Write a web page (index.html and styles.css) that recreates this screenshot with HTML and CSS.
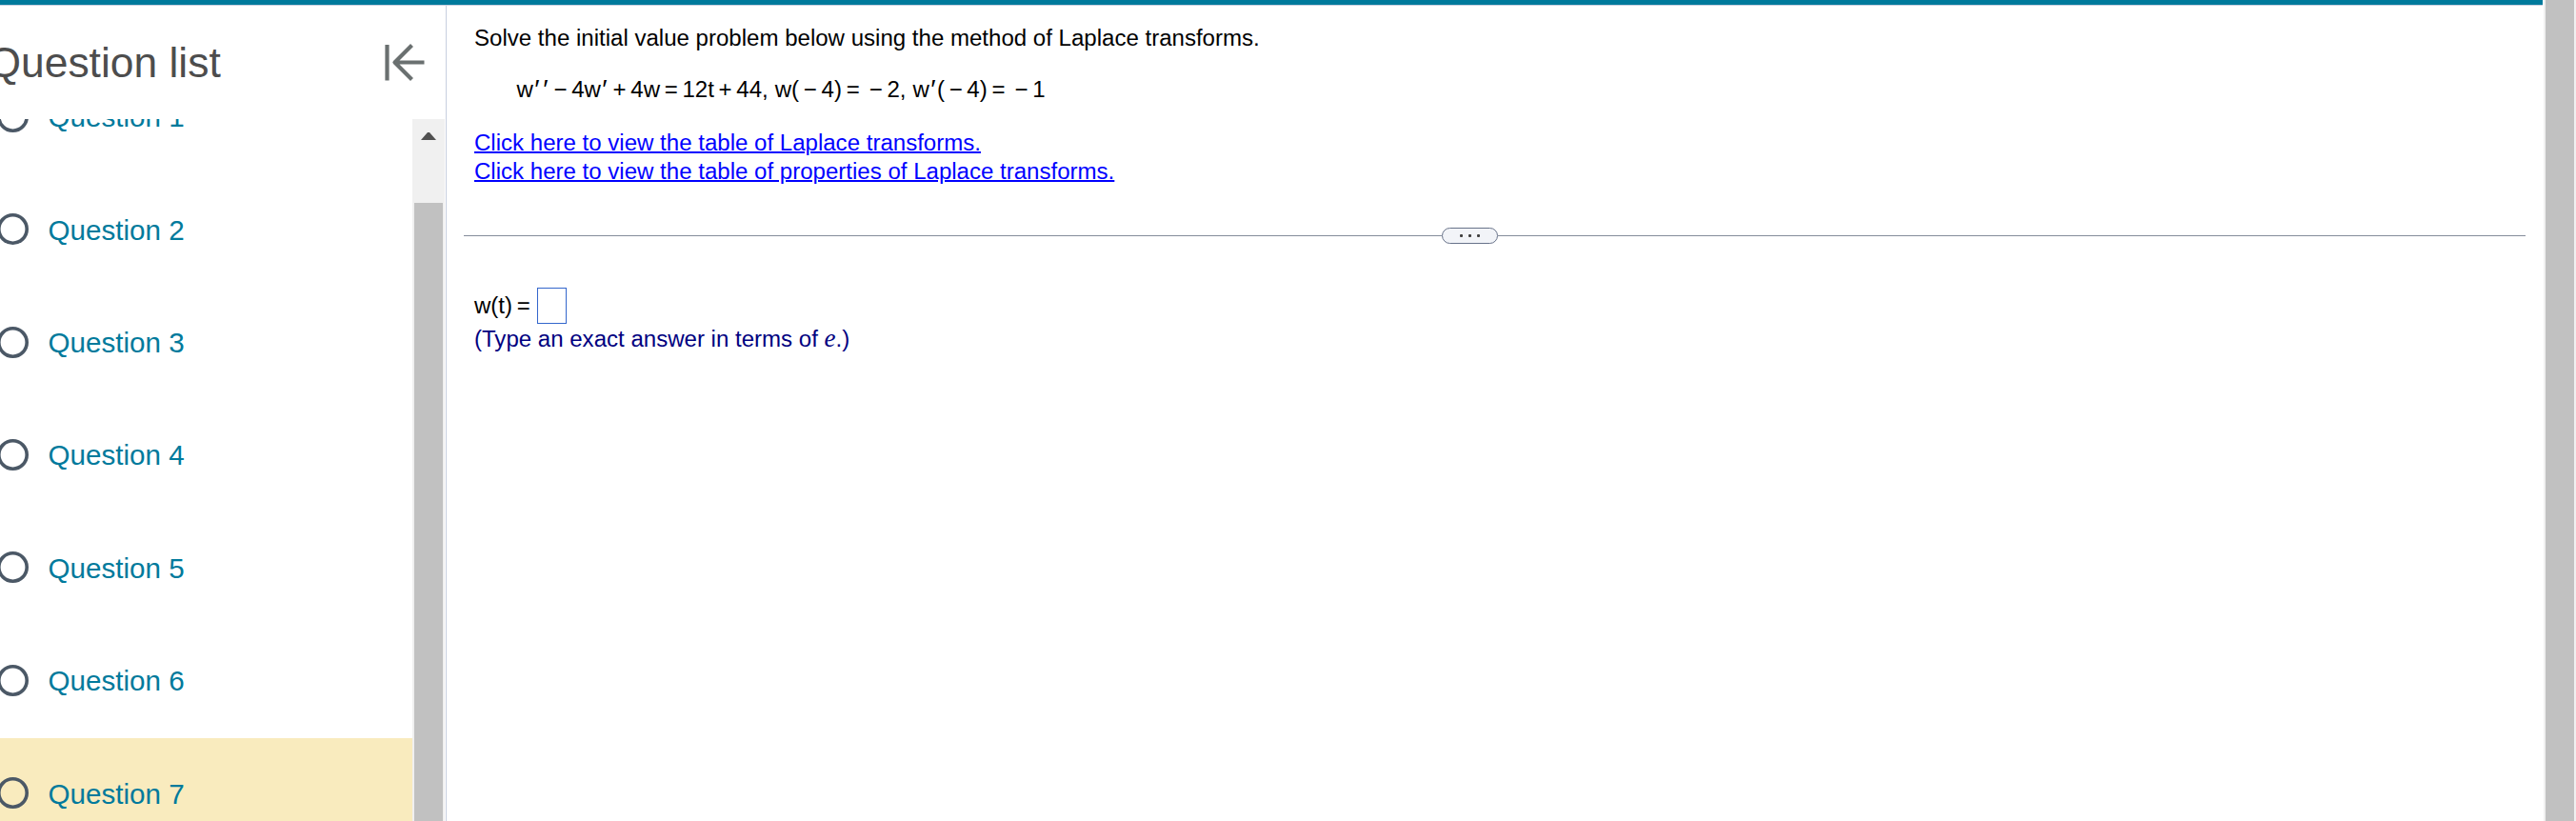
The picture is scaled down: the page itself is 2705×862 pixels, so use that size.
FILE: index.html
```
<!DOCTYPE html>
<html lang="en">
<head>
  <meta charset="UTF-8">
  <title>Question list</title>
  <link rel="stylesheet" href="styles.css">
</head>
<body>
  <svg width="0" height="0" class="defs">
    <symbol id="status" viewBox="0 0 33 33"><circle cx="16.500" cy="16.500" r="14.700" fill="none" stroke="#4b5866" stroke-width="3.600"/></symbol>
  </svg>

  <div class="page">
    <div class="top-bar"></div>

    <div class="content">
      <aside class="sidebar">
        <div class="sidebar-header">
          <h2>Question list</h2>
          <button class="collapse-btn" aria-label="Collapse question list">
            <svg width="42" height="40" viewBox="0 0 42 40" fill="none" stroke="#6a7070" stroke-width="4.200">
              <path d="M2.500 1v37.500"/>
              <path d="M41.500 19.500H11M28.500 1.500L10.500 19.500l18 18" stroke-linejoin="round"/>
            </svg>
          </button>
        </div>

        <div class="list-wrap">
          <ul class="question-list">
            <li><svg class="status"><use href="#status"/></svg><a>Question 1</a></li>
            <li><svg class="status"><use href="#status"/></svg><a>Question 2</a></li>
            <li><svg class="status"><use href="#status"/></svg><a>Question 3</a></li>
            <li><svg class="status"><use href="#status"/></svg><a>Question 4</a></li>
            <li><svg class="status"><use href="#status"/></svg><a>Question 5</a></li>
            <li><svg class="status"><use href="#status"/></svg><a>Question 6</a></li>
            <li class="active"><svg class="status"><use href="#status"/></svg><a>Question 7</a></li>
          </ul>
          <div class="list-scrollbar">
            <svg class="arrow-up" width="16" height="8" viewBox="0 0 16 8"><path d="M0 8L7 0h2l7 8z" fill="#505050"/></svg>
            <div class="thumb"></div>
          </div>
        </div>
      </aside>

      <main class="exercise">
        <p class="prompt">Solve the initial value problem below using the method of Laplace transforms.</p>

        <p class="equation">
          <span>w</span><i class="prime">′</i><i class="prime">′</i><span class="op after-prime">−</span><span>4w</span><i class="prime">′</i><span class="op after-prime">+</span><span>4w</span><span class="op">=</span><span>12t</span><span class="op">+</span><span>44,</span><span class="cond">w(</span><span class="op">−</span><span>4)</span><span class="op">=</span><span class="op neg">−</span><span>2,</span><span class="cond">w</span><i class="prime narrow">′</i><span>(</span><span class="op">−</span><span>4)</span><span class="op">=</span><span class="op neg">−</span><span>1</span>
        </p>

        <div class="links">
          <a href="#">Click here to view the table of Laplace transforms.</a>
          <a href="#">Click here to view the table of properties of Laplace transforms.</a>
        </div>

        <div class="divider">
          <span class="line"></span>
          <button class="handle" aria-label="Resize"><span></span><span></span><span></span></button>
          <span class="line right"></span>
        </div>

        <div class="answer">
          <span>w(t)</span><span class="op">=</span><span class="answer-box"></span>
        </div>
        <p class="hint">(Type an exact answer in terms of <i>e</i>.)</p>
      </main>
    </div>

    <div class="page-scrollbar"><div class="thumb"></div></div>
  </div>
</body>
</html>
```

FILE: styles.css
```
* {
  box-sizing: border-box;
}

body {
  margin: 0;
  overflow: hidden;
  font-family: "Liberation Sans", Arial, sans-serif;
  font-size: 24.05px;
  line-height: 30px;
  color: #000;
  background: #fff;
}

h2,
p,
ul {
  margin: 0;
  padding: 0;
}

button {
  padding: 0;
  border: none;
  background: none;
}

.defs {
  display: block;
}

.page {
  display: grid;
  grid-template-columns: 2670px 34px;
  grid-template-rows: 6px 1fr;
  column-gap: 1px;
  height: 862px;
}

.top-bar {
  background: #007a9c;
  border-bottom: 1px solid #c7cfdf;
}

.content {
  display: flex;
  min-height: 0;
}

.page-scrollbar {
  grid-column: 2;
  grid-row: 1 / 3;
  padding: 0 2px;
  background: #f0f0f0;
}

.thumb {
  height: 100%;
  background: #c1c1c1;
}

/* sidebar */

.sidebar {
  display: flex;
  flex-direction: column;
  width: 469px;
  border-right: 1px solid #c7cfdf;
}

.sidebar-header {
  display: flex;
  justify-content: space-between;
  flex-shrink: 0;
  height: 119px;
  padding-right: 22px;
}

.sidebar-header h2 {
  margin: 34px 0 0 -12.5px;
  font-size: 44.4px;
  font-weight: normal;
  line-height: 52px;
  color: #4d4d4d;
}

.collapse-btn {
  height: 40px;
  margin-top: 40px;
}

.collapse-btn svg {
  display: block;
}

.list-wrap {
  display: flex;
  flex: 1;
  min-height: 0;
  overflow: hidden;
}

.question-list {
  width: 433px;
  margin-top: -60.4px;
  list-style: none;
}

.question-list li {
  display: flex;
  align-items: center;
  height: 118.4px;
  padding-bottom: 3px;
}

.question-list .active {
  background: #f9ebbe;
}

.question-list a {
  margin-left: 20.5px;
  padding-top: 2px;
  font-size: 29.6px;
  line-height: 34px;
  color: #007a9c;
}

.status {
  width: 33px;
  height: 33px;
  margin-left: -3px;
}

.list-scrollbar {
  display: flex;
  flex-direction: column;
  width: 34px;
  padding: 0 2px;
  background: #f0f0f0;
}

.arrow-up {
  flex-shrink: 0;
  margin: 14px 7px 66px;
}

/* exercise */

.exercise {
  flex: 1;
  padding: 19px 18px 0;
}

.prompt,
.links,
.answer,
.hint {
  padding-left: 11px;
}

.equation {
  display: flex;
  margin: 24px 0 26px;
  padding-left: 55.5px;
}

.op {
  margin: 0 4.7px;
}

.op.after-prime {
  margin-left: 3.6px;
}

.op.neg {
  margin-left: 5.4px;
}

.cond {
  margin-left: 7px;
}

.prime {
  width: 9px;
  font-size: 28px;
}

.prime.narrow {
  width: 8px;
}

.links a {
  display: block;
  width: max-content;
  color: #0000ff;
  text-decoration-thickness: 2px;
}

.divider {
  display: flex;
  align-items: center;
  height: 17px;
  margin-top: 44px;
}

.line {
  width: 1027px;
  height: 1px;
  background: #848c9a;
}

.line.right {
  width: 1079px;
}

.handle {
  display: flex;
  align-items: center;
  justify-content: center;
  gap: 6px;
  width: 59px;
  height: 17px;
  border: 1px solid #68738a;
  border-radius: 9px;
  background: #f2f4f8;
}

.handle span {
  width: 3px;
  height: 3px;
  border-radius: 1px;
  background: #404040;
}

.answer {
  display: flex;
  margin-top: 46px;
  line-height: 38px;
}

.answer-box {
  width: 31px;
  height: 38px;
  margin-left: 2.8px;
  border: 1px solid #3366cc;
}

.hint {
  margin-top: 1px;
  color: #00007f;
}

.hint i {
  font-family: "Liberation Serif", "Times New Roman", serif;
  font-size: 27px;
  line-height: 1;
}
```
